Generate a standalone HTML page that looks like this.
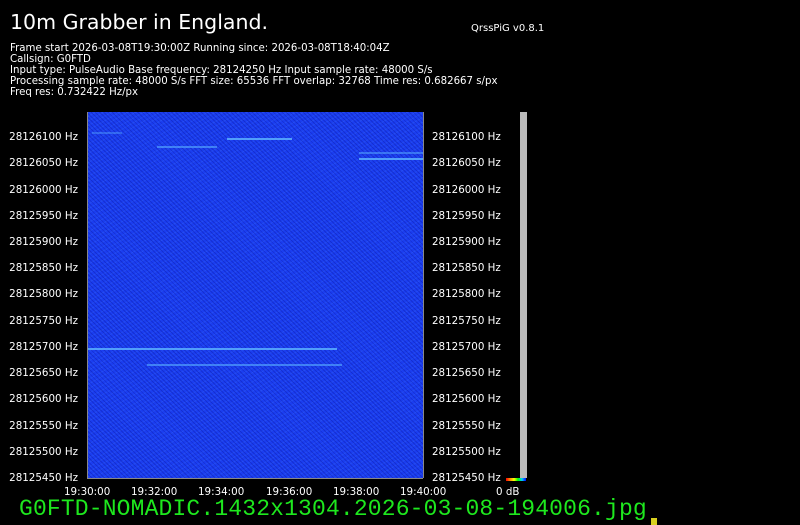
<!DOCTYPE html>
<html><head><meta charset="utf-8"><style>
html,body{margin:0;padding:0;background:#000;width:800px;height:525px;overflow:hidden;position:relative;font-family:"DejaVu Sans","Liberation Sans",sans-serif;color:#fff}
.a{position:absolute;white-space:nowrap}
.t{font-size:20.5px;left:10px;top:10px}
.v{font-size:10px;left:471px;top:23px}
.info{left:10px;top:43px;font-size:10.2px;line-height:11px}
.lab{font-size:10.3px;line-height:12px}
.l{right:722px;text-align:right}
.r{left:432px}
#plot{left:87px;top:112px;width:336px;height:366px;background:#1b3ef0;overflow:hidden;
background-image:repeating-linear-gradient(45deg,rgba(0,0,120,.25) 0 1px,transparent 1px 3px),repeating-linear-gradient(-30deg,rgba(80,140,255,.18) 0 1px,transparent 1px 4px)}
.s{position:absolute;height:2px;background:#5ab0ff;opacity:.85}
.fn{left:19px;top:496px;font-family:"Liberation Mono",monospace;font-size:23px;color:#1ee81e;letter-spacing:0.15px}
</style></head><body>
<div class="a t">10m Grabber in England.</div>
<div class="a v">QrssPiG v0.8.1</div>
<div class="a info">Frame start 2026-03-08T19:30:00Z Running since: 2026-03-08T18:40:04Z<br>Callsign: G0FTD<br>Input type: PulseAudio Base frequency: 28124250 Hz Input sample rate: 48000 S/s<br>Processing sample rate: 48000 S/s FFT size: 65536 FFT overlap: 32768 Time res: 0.682667 s/px<br>Freq res: 0.732422 Hz/px</div>
<div class="a" id="plot">
<div class="s" style="left:70px;top:34px;width:60px;opacity:.6"></div>
<div class="s" style="left:140px;top:26px;width:65px"></div>
<div class="s" style="left:272px;top:46px;width:64px"></div>
<div class="s" style="left:272px;top:40px;width:64px;opacity:.5"></div>
<div class="s" style="left:0;top:236px;width:250px"></div>
<div class="s" style="left:60px;top:252px;width:195px;opacity:.6"></div>
<div class="s" style="left:5px;top:20px;width:30px;opacity:.4"></div>
</div>
<div class="a" style="left:83px;top:112px;width:4px;height:366px;border-right:1px solid #888"></div>
<div class="a" style="left:423px;top:112px;width:4px;height:366px;border-left:1px solid #888"></div>
<div class="a" style="left:520px;top:112px;width:7px;height:366px;background:#bbb"></div>
<div class="a" style="left:506px;top:478px;width:20px;height:3px;background:linear-gradient(90deg,red,#f80,#ff0,#0f0,#0cf,#00f)"></div>
<div class="a" style="left:87px;top:478px;width:336px;height:5px;border-top:1px solid #888"></div>
<div class="a lab" style="left:64px;top:486px">19:30:00</div>
<div class="a lab" style="left:131px;top:486px">19:32:00</div>
<div class="a lab" style="left:198px;top:486px">19:34:00</div>
<div class="a lab" style="left:266px;top:486px">19:36:00</div>
<div class="a lab" style="left:333px;top:486px">19:38:00</div>
<div class="a lab" style="left:400px;top:486px">19:40:00</div>
<div class="a lab" style="left:496px;top:486px">0 dB</div>
<div class="a fn">G0FTD-NOMADIC.1432x1304.2026-03-08-194006.jpg</div>
<div class="a" style="left:651px;top:518px;width:6px;height:7px;background:#d8d020"></div>
<div class="a lab l" style="top:131px">28126100 Hz</div><div class="a lab r" style="top:131px">28126100 Hz</div>
<div class="a lab l" style="top:157px">28126050 Hz</div><div class="a lab r" style="top:157px">28126050 Hz</div>
<div class="a lab l" style="top:184px">28126000 Hz</div><div class="a lab r" style="top:184px">28126000 Hz</div>
<div class="a lab l" style="top:210px">28125950 Hz</div><div class="a lab r" style="top:210px">28125950 Hz</div>
<div class="a lab l" style="top:236px">28125900 Hz</div><div class="a lab r" style="top:236px">28125900 Hz</div>
<div class="a lab l" style="top:262px">28125850 Hz</div><div class="a lab r" style="top:262px">28125850 Hz</div>
<div class="a lab l" style="top:288px">28125800 Hz</div><div class="a lab r" style="top:288px">28125800 Hz</div>
<div class="a lab l" style="top:315px">28125750 Hz</div><div class="a lab r" style="top:315px">28125750 Hz</div>
<div class="a lab l" style="top:341px">28125700 Hz</div><div class="a lab r" style="top:341px">28125700 Hz</div>
<div class="a lab l" style="top:367px">28125650 Hz</div><div class="a lab r" style="top:367px">28125650 Hz</div>
<div class="a lab l" style="top:393px">28125600 Hz</div><div class="a lab r" style="top:393px">28125600 Hz</div>
<div class="a lab l" style="top:420px">28125550 Hz</div><div class="a lab r" style="top:420px">28125550 Hz</div>
<div class="a lab l" style="top:446px">28125500 Hz</div><div class="a lab r" style="top:446px">28125500 Hz</div>
<div class="a lab l" style="top:472px">28125450 Hz</div><div class="a lab r" style="top:472px">28125450 Hz</div>
</body></html>
